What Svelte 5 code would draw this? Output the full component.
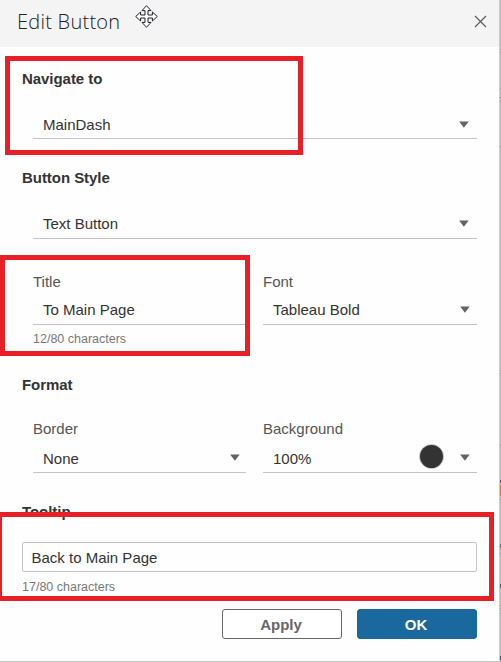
<script>
  const marks = [
    { x: 5, y: 56, w: 298, h: 99 },
    { x: 0, y: 255, w: 250, h: 101 },
    { x: -3, y: 512, w: 497, h: 89 }
  ];
  const fragments = [
    { y: 52, h: 1, c: '#888' }, { y: 88, h: 1, c: '#999' }, { y: 97, h: 1, c: '#777' },
    { y: 101, h: 1, c: '#888' }, { y: 146, h: 1, c: '#777' }, { y: 373, h: 1, c: '#aaa' },
    { y: 445, h: 1, c: '#888' }, { y: 480, h: 3, c: '#536083' }, { y: 485, h: 11, c: '#c77a2c' },
    { y: 499, h: 1, c: '#888' }, { y: 544, h: 4, c: '#53698e' }, { y: 549, h: 1, c: '#b58b60' },
    { y: 553, h: 1, c: '#74849c' }, { y: 584, h: 4, c: '#3f5c8a' }, { y: 605, h: 1, c: '#b58b60' },
    { y: 608, h: 1, c: '#8490a3' }, { y: 656, h: 4, c: '#3f5c8a' }
  ];
</script>

{#snippet arrow()}
  <svg class="arrow" width="10" height="7" viewBox="0 0 10 7"><path d="M.1.4h9.6L4.9 6.8z" fill="#636363" /></svg>
{/snippet}

<div class="screen">
  <div class="dialog">
    <header>
      <h1>Edit Button</h1>
      <svg class="close" width="13" height="13" viewBox="0 0 13 13"><path d="M1 1l11 11M12 1L1 12" stroke="#5a5a5a" stroke-width="1.2" /></svg>
    </header>

    <main>
      <h2>Navigate to</h2>
      <div class="field wide target"><span>MainDash</span>{@render arrow()}</div>

      <h2 class="style">Button Style</h2>
      <div class="field wide"><span>Text Button</span>{@render arrow()}</div>

      <div class="row first">
        <div class="col">
          <span class="label">Title</span>
          <div class="field"><span>To Main Page</span></div>
          <span class="count">12/80 characters</span>
        </div>
        <div class="col right">
          <span class="label">Font</span>
          <div class="field"><span>Tableau Bold</span>{@render arrow()}</div>
        </div>
      </div>

      <h2 class="format">Format</h2>
      <div class="row second">
        <div class="col">
          <span class="label">Border</span>
          <div class="field"><span>None</span>{@render arrow()}</div>
        </div>
        <div class="col right">
          <span class="label">Background</span>
          <div class="field"><span>100%</span><i class="swatch"></i>{@render arrow()}</div>
        </div>
      </div>

      <h2 class="tip">Tooltip</h2>
      <div class="input">Back to Main Page</div>
      <span class="count last">17/80 characters</span>

      <footer>
        <button class="apply">Apply</button>
        <button class="ok">OK</button>
      </footer>
    </main>
  </div>
  <div class="edge"></div>

  {#each fragments as f}
    <i class="fragment" style="top:{f.y}px;height:{f.h}px;background:{f.c}"></i>
  {/each}
  {#each marks as m}
    <div class="mark" style="left:{m.x}px;top:{m.y}px;width:{m.w}px;height:{m.h}px"></div>
  {/each}
  <svg class="cursor" width="23" height="23" viewBox="0 0 23 23">
    <path d="M11.5.7L16 5.6H13V10h4.4V7l4.9 4.5-4.9 4.5v-3H13v4.4h3l-4.5 4.9L7 17.4h3V13H5.6v3L.7 11.5 5.6 7v3H10V5.6H7z" fill="#fff" stroke="#24242c" stroke-width="1" />
  </svg>
</div>

<style>
  .screen {
    position: relative;
    display: flex;
    width: 501px;
    height: 662px;
    overflow: hidden;
    background: #fefefe;
    font-family: "Liberation Sans", Arial, sans-serif;
    font-size: 15px;
    color: #333;
  }
  .dialog { width: 499px; box-sizing: border-box; border-bottom: 1px solid #c6c6c6; }
  .edge { width: 2px; background: linear-gradient(90deg, #c9c9c9 50%, #bcbcbc 50%); }
  header {
    display: flex;
    justify-content: space-between;
    align-items: center;
    height: 47px;
    padding: 0 12px 4px 17px;
    box-sizing: border-box;
    background: #f4f4f4;
  }
  h1 {
    margin: 0;
    font: 300 20px/28px "Open Sans", "Noto Sans", sans-serif;
    letter-spacing: 0.25px;
    color: #222;
  }
  .close { display: block; }
  main { padding: 22px 22px 0; }
  h2 { margin: 0; font-size: 15px; line-height: 20px; font-weight: 700; letter-spacing: -0.05px; }
  h2.style { margin-top: 29px; }
  h2.format { margin-top: 26px; }
  h2.tip { margin-top: 29px; }
  .field {
    display: flex;
    align-items: center;
    height: 30px;
    box-sizing: border-box;
    padding: 0 7px 0 10px;
    border-bottom: 1px solid #c4c4c4;
  }
  .field span { flex: 1; line-height: 20px; }
  .field.wide { margin: 21px 0 0 11px; padding-right: 8px; width: 444px; }
  .field.target { margin-top: 20px; padding-top: 2px; }
  .row { display: flex; gap: 17px; margin-left: 11px; }
  .first { margin-top: 33px; }
  .second { margin-top: 24px; }
  .col { width: 213px; }
  .col.right { width: 214px; }
  .col.right .field { padding-right: 7.5px; }
  .label { display: block; height: 23px; line-height: 20px; color: #555; }
  .second .label { height: 24px; }
  .second .field { padding-right: 6px; }
  .second .field span { padding-top: 2px; }
  .count { display: block; margin-top: 4px; font-size: 12.5px; line-height: 20px; color: #777; }
  .count.last { margin-top: 5px; }
  .arrow { display: block; }
  .swatch {
    width: 23px;
    height: 23px;
    margin: -2px 17px 0 0;
    border-radius: 50%;
    background: #333;
    box-shadow: 0 0 0 1px #c8c8c8;
  }
  .input {
    height: 30px;
    width: 455px;
    box-sizing: border-box;
    margin-top: 20px;
    padding-left: 8.5px;
    border: 1px solid #c4c4c4;
    border-radius: 2px;
    line-height: 30px;
  }
  footer { display: flex; gap: 15px; justify-content: flex-end; margin-top: 12px; }
  button {
    width: 120px;
    height: 30px;
    padding: 0 2px 0 0;
    border: 1px solid #666;
    border-radius: 3px;
    background: #fff;
    font: 700 15px "Liberation Sans", Arial, sans-serif;
    color: #666;
  }
  .ok { border-color: #19699f; background: #19699f; color: #fff; }
  .mark { position: absolute; box-sizing: border-box; border: 5px solid #e71f27; }
  .fragment { position: absolute; left: 500px; width: 1px; }
  .cursor { position: absolute; left: 135px; top: 5px; }
</style>
